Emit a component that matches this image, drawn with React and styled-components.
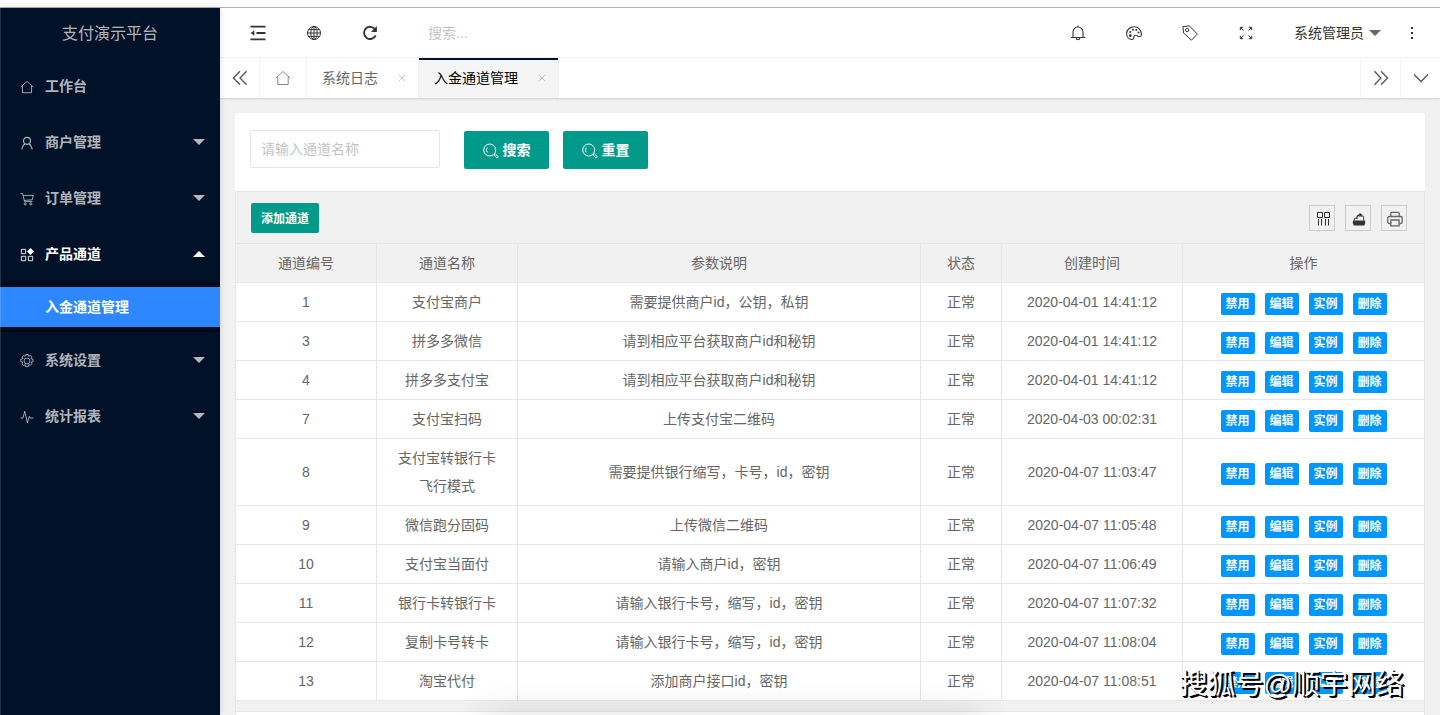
import React from "react";
import styled, { createGlobalStyle, css } from "styled-components";

const GlobalStyle = createGlobalStyle`
  * { box-sizing: border-box; }
  html, body { margin: 0; padding: 0; height: 100%; overflow: hidden; }
  body, button, input {
    font-family: "Liberation Sans", "Noto Sans CJK SC", sans-serif;
    font-size: 14px;
  }
  a { color: inherit; text-decoration: none; }
  button { padding: 0; border: 0; background: none; color: inherit; cursor: pointer; }
`;

/* ---------- icons ---------- */

const Svg = styled.svg`
  display: block;
  flex: none;
  fill: none;
  stroke: currentColor;
`;

function Icon({ size = 16, weight = 1, children }) {
  return (
    <Svg width={size} height={size} viewBox="0 0 16 16" strokeWidth={weight} aria-hidden="true">
      {children}
    </Svg>
  );
}

const icons = {
  home: <path d="M.8 8 8 1.6 15.2 8M2.8 6.6v7.9h10.4V6.6" />,
  user: <path d="M8 1.500a4 4 0 1 1 0 8 4 4 0 0 1 0-8ZM2.200 15.500c.2-3.200 1.300-5 3.600-6.600M13.800 15.500c-.2-3.200-1.300-5-3.600-6.600" strokeWidth="1.300" />,
  cart: (
    <>
      <path d="M.5 1.800h2.500l2.200 9h9M3.600 3.900h11.600l-1.300 5L5 9.600" />
      <circle cx="6" cy="13.600" r="1.200" />
      <circle cx="12.400" cy="13.600" r="1.200" />
    </>
  ),
  grid: (
    <>
      <path d="M1.500 1.500h5v5h-5zM1.500 9.500h5v5h-5zM9.500 9.500h5v5h-5z" />
      <path d="m12 0 4 4-4 4-4-4z" fill="currentColor" stroke="none" />
    </>
  ),
  gear: (
    <>
      <circle cx="8" cy="8" r="3.400" />
      <path d="M6.600.6h2.800l.6 2 1.900-.9 1.700 1.800-.9 1.900 2.200.6v2.700l-2.200.7.9 1.800-1.800 1.900-1.800-.9-.6 2.200H6.600L6 12.200l-1.800.9-1.900-1.900.9-1.800L.9 8.700V6l2.300-.6-.9-1.900L4 1.700l1.900.9z" strokeLinejoin="round" />
    </>
  ),
  pulse: <path d="M.5 9.200h2.900l2-7.700 3.100 13 2.100-7.300 1.100 2h3.800" />,
  fold: (
    <>
      <path d="M.5 1.700h15M6.500 8h9M.5 14.300h15" />
      <path d="M.8 8 4.300 5.200v5.600z" fill="currentColor" stroke="none" />
    </>
  ),
  globe: (
    <>
      <circle cx="8" cy="8" r="6.500" />
      <ellipse cx="8" cy="8" rx="3.200" ry="6.500" />
      <path d="M8 1.500v13M1.500 8h13M2.500 4.600h11M2.500 11.400h11" />
    </>
  ),
  refresh: (
    <>
      <path d="M13.200 4.500A6.100 6.100 0 1 0 13.700 10.400" />
      <path d="M14.900 1v6H9z" fill="currentColor" stroke="none" />
    </>
  ),
  bell: (
    <>
      <path d="M1 12.500h14M3 12.500V7a5 5 0 0 1 10 0v5.500M6.300 13a1.700 1.700 0 0 0 3.400 0M8 2V.6" />
    </>
  ),
  palette: (
    <>
      <path d="M8.300 1.800C3.900 1.800.6 4.700.6 8.600c0 3.600 2.400 5.900 5.200 5.900 1.700 0 2-1.200 2.100-2.500.1-1.200 1-1.900 2.200-1.700 1.400.2 1.900 1.500 3.300 1.500 1.300 0 2.100-1.100 2-2.900-.2-4-3.100-7.100-7.100-7.100Z" />
      <g fill="currentColor" stroke="none">
        <circle cx="4.300" cy="10.700" r="1.400" />
        <circle cx="4.300" cy="7" r="1" />
        <circle cx="7" cy="4.700" r="1" />
        <circle cx="10.300" cy="5" r="1" />
        <circle cx="12.500" cy="7.600" r="1" />
      </g>
    </>
  ),
  tag: (
    <>
      <path d="M.9 1.700 7.300.8l8 8.300-5.900 6.100L1.600 8z" strokeLinejoin="round" />
      <circle cx="5.200" cy="5" r="1.700" />
    </>
  ),
  expand: <path d="M5.600 5.600 2.300 2.300M2.300 5.200V2.300h2.900M10.400 5.600l3.300-3.300M10.800 2.300h2.900v2.900M5.600 10.400l-3.300 3.300M2.300 10.800v2.900h2.900M10.400 10.400l3.300 3.300M13.700 10.800v2.900h-2.900" />,
  dots: (
    <g fill="currentColor" stroke="none">
      <path d="M7 2h2v2H7zM7 7h2v2H7zM7 12h2v2H7z" />
    </g>
  ),
  left: <path d="M8 1.200 1.400 8 8 14.800M14.600 1.200 8 8l6.600 6.800" />,
  right: <path d="m1.400 1.200 6.600 6.800-6.600 6.800M8 1.200 14.600 8 8 14.800" />,
  down: <path d="M1 4.500 8 11.500l7-7" />,
  close: <path d="m1.500 1.500 13 13M14.500 1.500l-13 13" />,
  search: (
    <>
      <circle cx="6.700" cy="7" r="6" />
      <path d="M4.300 4.600a3.800 3.800 0 0 0 0 4.800" />
      <path d="m11 11.900 1.300-1.200 3 3.200-1.200 1.200z" />
    </>
  ),
  columns: <path d="M2.500 1.500h5v5h-5zM9.500 1.500h5v5h-5zM3.500 8v6.500M6.500 8v6.500M10.500 8v6.500M13.500 8v6.500" />,
  exporter: (
    <>
      <path d="M1 9.800h14V13l-1 2.300H2L1 13z" fill="currentColor" stroke="none" />
      <path d="M2.700 10V7.200h2M13.300 10V4.800h-2.800" />
      <path d="M5.500 8c0-3 1-4.600 3.400-4.600" strokeWidth="1.600" />
      <path d="M8.500.8 12.200 3.400 8.500 6z" fill="currentColor" stroke="none" />
    </>
  ),
  printer: (
    <>
      <path d="M3.800 5.500V2.300c0-.6.300-.9.900-.9h6.600c.6 0 .9.300.9.900v3.200" />
      <path d="M3.800 12.500H2.200c-.8 0-1.400-.6-1.400-1.400V7c0-.9.600-1.500 1.500-1.500h11.400c.9 0 1.500.6 1.500 1.500v4.100c0 .8-.6 1.400-1.400 1.400h-1.600" />
      <path d="M3.900 9h8.200v5.800H3.900z" />
    </>
  ),
};

const Caret = styled.span`
  flex: none;
  border: 6px solid transparent;
  ${(p) =>
    p.$up
      ? css`border-bottom-color: currentColor; border-top-width: 0;`
      : css`border-top-color: currentColor; border-bottom-width: 0;`}
`;

/* ---------- shell ---------- */

const Page = styled.div`
  position: relative;
  display: flex;
  flex-direction: column;
  height: 100vh;
  overflow: hidden;
  background: #fff;
  color: #666;
`;

const WindowEdge = styled.div`
  flex: none;
  height: 8px;
  border-bottom: 1px solid #b2b2b2;
`;

const Shell = styled.div`
  flex: 1;
  min-height: 0;
  display: flex;
`;

const Sidebar = styled.aside`
  position: relative;
  z-index: 1;
  flex: none;
  width: 220px;
  background: #001128;
  color: rgba(255, 255, 255, 0.7);
  box-shadow: 0 0 6px rgba(0, 0, 0, 0.15);
  &::after {
    content: "";
    position: absolute;
    inset: 0 auto 0 0;
    width: 1px;
    background: rgba(255, 255, 255, 0.15);
  }
`;

const Brand = styled.h1`
  margin: 0;
  height: 50px;
  line-height: 52px;
  text-align: center;
  font-size: 16px;
  font-weight: 400;
`;

const MenuItem = styled.a`
  display: flex;
  align-items: center;
  height: 56px;
  padding: 0 15px 0 20px;
  font-weight: 700;
  color: ${(p) => (p.$open ? "#fff" : "inherit")};
  & > svg { margin-top: 2px; }
`;

const MenuLabel = styled.span`
  flex: 1;
  padding: 0 0 2px 11px;
`;

const SubMenu = styled.div`
  padding: 5px 0;
  background: #000a18;
`;

const SubItem = styled.a`
  display: block;
  height: 40px;
  line-height: 40px;
  padding-left: 45px;
  background: #2d87ff;
  color: #fff;
  font-weight: 700;
`;

const Main = styled.div`
  flex: 1;
  min-width: 0;
  display: flex;
  flex-direction: column;
  background: #f1f1f1;
`;

const Header = styled.header`
  flex: none;
  display: flex;
  align-items: center;
  height: 50px;
  padding-left: 10px;
  border-bottom: 1px solid #f5f5f5;
  background: #fff;
  color: #333;
`;

const HeaderButton = styled.button`
  display: flex;
  align-items: center;
  gap: 5px;
  height: 49px;
  padding: 0 20px;
`;

const UserButton = styled(HeaderButton)`
  padding: 0 3px 0 20px;
  & > ${Caret} { color: #666; }
`;

const UserName = styled.span`
  padding-bottom: 2px;
`;

const HeaderSearch = styled.input`
  flex: 1;
  min-width: 0;
  height: 48px;
  margin-left: 30px;
  padding: 0;
  border: 0;
  outline: 0;
  background: none;
  &::placeholder { color: #c4c4c4; opacity: 1; }
`;

const Tabs = styled.nav`
  flex: none;
  display: flex;
  height: 40px;
  background: #fff;
  box-shadow: 0 1px 2px rgba(0, 0, 0, 0.15);
`;

const TabControl = styled.button`
  display: flex;
  align-items: center;
  justify-content: center;
  width: ${(p) => (p.$wide ? 47 : 40)}px;
  border: 0 solid #f3f3f3;
  border-width: ${(p) => (p.$end ? "0 0 0 1px" : "0 1px 0 0")};
  color: ${(p) => (p.$wide ? "#888" : "#555")};
`;

const Tab = styled.div`
  display: flex;
  align-items: center;
  gap: 16px;
  padding: 0 8px 0 15px;
  border-right: 1px solid #f3f3f3;
  ${(p) =>
    p.$active &&
    css`
      background: #f5f5f5;
      color: #000;
      box-shadow: inset 0 2px #001128;
    `}
`;

const TabLink = styled.a`
  padding-bottom: 2px;
`;

const TabClose = styled.button`
  display: flex;
  align-items: center;
  justify-content: center;
  width: 16px;
  height: 16px;
  color: #c8c8c8;
`;

const TabSpace = styled.div`
  flex: 1;
`;

/* ---------- content ---------- */

const Content = styled.main`
  flex: 1;
  min-height: 0;
  overflow: hidden;
  padding: 15px;
`;

const SearchForm = styled.form`
  display: flex;
  align-items: center;
  height: 78px;
  padding: 0 15px 4px;
  border-radius: 2px 2px 0 0;
  background: #fff;
`;

const TextInput = styled.input`
  width: 190px;
  height: 38px;
  margin: 0 24px 2px 0;
  padding: 0 10px;
  border: 1px solid #e6e6e6;
  border-radius: 2px;
  outline: 0;
  &::placeholder { color: #c4c4c4; opacity: 1; }
`;

const PrimaryButton = styled.button`
  display: flex;
  align-items: center;
  justify-content: center;
  gap: 4px;
  border-radius: 2px;
  background: #009a8a;
  color: #fff;
  font-weight: 700;
  ${(p) =>
    p.$small
      ? css`width: 68px; height: 30px; font-size: 12px;`
      : css`width: 85px; height: 38px; margin-right: 14px; padding-bottom: 2px;`}
  & > svg { margin-top: 4px; }
`;

const TableBox = styled.section`
  border: 1px solid #e6e6e6;
  background: #fff;
`;

const TableTools = styled.div`
  display: flex;
  align-items: center;
  gap: 10px;
  height: 52px;
  padding: 0 17px 0 15px;
  border-bottom: 1px solid #e6e6e6;
  background: #f1f1f1;
  & > ${PrimaryButton} { margin-right: auto; }
`;

const ToolButton = styled.button`
  display: flex;
  align-items: center;
  justify-content: center;
  width: 26px;
  height: 26px;
  padding: 2px 0 0 2px;
  border: 1px solid #ccc;
  color: ${(p) => (p.$muted ? "#666" : "#333")};
`;

const Table = styled.table`
  width: 100%;
  table-layout: fixed;
  border-collapse: separate;
  border-spacing: 0;
`;

const cell = css`
  padding: 5px 15px;
  line-height: 28px;
  text-align: center;
  border: 0 solid #e6e6e6;
  border-width: 0 1px 1px 0;
  &:last-child { border-right: 0; }
`;

const Th = styled.th`
  ${cell}
  width: ${(p) => p.$width || "auto"};
  background: #f1f1f1;
  font-weight: 400;
`;

const Td = styled.td`
  ${cell}
`;

const ActionCell = styled(Td)`
  padding: 4px 0 0;
`;

const Actions = styled.div`
  display: flex;
  justify-content: center;
  gap: 10px;
`;

const ActionButton = styled.button`
  width: 34px;
  height: 22px;
  border-radius: 2px;
  background: #0096ff;
  color: #fff;
  font-size: 12px;
  font-weight: 700;
  line-height: 22px;
`;

const ScrollGutter = styled.div`
  height: 11px;
  border-bottom: 1px solid #e6e6e6;
  background: #f1f1f1;
`;

const TableFoot = styled.div`
  height: 40px;
`;

const DockShadow = styled.div`
  position: absolute;
  top: 100%;
  left: 34%;
  right: 32%;
  height: 40px;
  box-shadow: 0 0 36px 2px rgba(0, 0, 0, 0.12);
`;

const Watermark = styled.div`
  position: absolute;
  z-index: 2;
  right: 36px;
  bottom: 10px;
  color: #fff;
  font-size: 28px;
  line-height: 40px;
  white-space: nowrap;
  text-shadow: 1px 1px 0 #000, 2px 2px 0 #000;
`;

const menu = [
  { icon: "home", label: "工作台", leaf: true },
  { icon: "user", label: "商户管理" },
  { icon: "cart", label: "订单管理" },
  { icon: "grid", label: "产品通道", children: ["入金通道管理"] },
  { icon: "gear", label: "系统设置" },
  { icon: "pulse", label: "统计报表" },
];

const columns = [
  ["通道编号", "141px"],
  ["通道名称", "141px"],
  ["参数说明"],
  ["状态", "81px"],
  ["创建时间", "181px"],
  ["操作", "241px"],
];

const rows = [
  [1, "支付宝商户", "需要提供商户id，公钥，私钥", "2020-04-01 14:41:12"],
  [3, "拼多多微信", "请到相应平台获取商户id和秘钥", "2020-04-01 14:41:12"],
  [4, "拼多多支付宝", "请到相应平台获取商户id和秘钥", "2020-04-01 14:41:12"],
  [7, "支付宝扫码", "上传支付宝二维码", "2020-04-03 00:02:31"],
  [8, "支付宝转银行卡飞行模式", "需要提供银行缩写，卡号，id，密钥", "2020-04-07 11:03:47"],
  [9, "微信跑分固码", "上传微信二维码", "2020-04-07 11:05:48"],
  [10, "支付宝当面付", "请输入商户id，密钥", "2020-04-07 11:06:49"],
  [11, "银行卡转银行卡", "请输入银行卡号，缩写，id，密钥", "2020-04-07 11:07:32"],
  [12, "复制卡号转卡", "请输入银行卡号，缩写，id，密钥", "2020-04-07 11:08:04"],
  [13, "淘宝代付", "添加商户接口id，密钥", "2020-04-07 11:08:51"],
];

const actions = ["禁用", "编辑", "实例", "删除"];

export default function App() {
  return (
    <Page>
      <GlobalStyle />
      <WindowEdge />
      <Shell>
        <Sidebar>
          <Brand>支付演示平台</Brand>
          <nav>
            {menu.map((m) => (
              <React.Fragment key={m.label}>
                <MenuItem href="#" $open={!!m.children}>
                  <Icon size={14}>{icons[m.icon]}</Icon>
                  <MenuLabel>{m.label}</MenuLabel>
                  {!m.leaf && <Caret $up={!!m.children} />}
                </MenuItem>
                {m.children && (
                  <SubMenu>
                    {m.children.map((c) => (
                      <SubItem href="#" key={c}>{c}</SubItem>
                    ))}
                  </SubMenu>
                )}
              </React.Fragment>
            ))}
          </nav>
        </Sidebar>
        <Main>
          <Header>
            <HeaderButton aria-label="收起菜单"><Icon weight={1.8}>{icons.fold}</Icon></HeaderButton>
            <HeaderButton aria-label="网站"><Icon>{icons.globe}</Icon></HeaderButton>
            <HeaderButton aria-label="刷新"><Icon weight={1.9}>{icons.refresh}</Icon></HeaderButton>
            <HeaderSearch aria-label="搜索" placeholder="搜索..." />
            <HeaderButton aria-label="消息"><Icon weight={1.1}>{icons.bell}</Icon></HeaderButton>
            <HeaderButton aria-label="主题"><Icon weight={1.1}>{icons.palette}</Icon></HeaderButton>
            <HeaderButton aria-label="便签"><Icon>{icons.tag}</Icon></HeaderButton>
            <HeaderButton aria-label="全屏"><Icon>{icons.expand}</Icon></HeaderButton>
            <UserButton><UserName>系统管理员</UserName><Caret /></UserButton>
            <HeaderButton aria-label="更多"><Icon>{icons.dots}</Icon></HeaderButton>
          </Header>
          <Tabs>
            <TabControl aria-label="向左"><Icon weight={1.3}>{icons.left}</Icon></TabControl>
            <TabControl $wide aria-label="首页"><Icon>{icons.home}</Icon></TabControl>
            <Tab>
              <TabLink href="#">系统日志</TabLink>
              <TabClose aria-label="关闭系统日志"><Icon size={8} weight={2}>{icons.close}</Icon></TabClose>
            </Tab>
            <Tab $active>
              <TabLink href="#">入金通道管理</TabLink>
              <TabClose aria-label="关闭入金通道管理"><Icon size={8} weight={2}>{icons.close}</Icon></TabClose>
            </Tab>
            <TabSpace />
            <TabControl $end aria-label="向右"><Icon weight={1.3}>{icons.right}</Icon></TabControl>
            <TabControl $end aria-label="标签操作"><Icon weight={1.3}>{icons.down}</Icon></TabControl>
          </Tabs>
          <Content>
            <SearchForm onSubmit={(e) => e.preventDefault()}>
              <TextInput aria-label="通道名称" placeholder="请输入通道名称" />
              <PrimaryButton><Icon>{icons.search}</Icon>搜索</PrimaryButton>
              <PrimaryButton type="reset"><Icon>{icons.search}</Icon>重置</PrimaryButton>
            </SearchForm>
            <TableBox>
              <TableTools>
                <PrimaryButton $small>添加通道</PrimaryButton>
                <ToolButton aria-label="筛选列"><Icon>{icons.columns}</Icon></ToolButton>
                <ToolButton aria-label="导出"><Icon size={14}>{icons.exporter}</Icon></ToolButton>
                <ToolButton $muted aria-label="打印"><Icon weight={1.3}>{icons.printer}</Icon></ToolButton>
              </TableTools>
              <Table>
                <thead>
                  <tr>
                    {columns.map(([name, width]) => (
                      <Th key={name} $width={width}>{name}</Th>
                    ))}
                  </tr>
                </thead>
                <tbody>
                  {rows.map(([id, name, desc, time]) => (
                    <tr key={id}>
                      <Td>{id}</Td>
                      <Td>{name}</Td>
                      <Td>{desc}</Td>
                      <Td>正常</Td>
                      <Td>{time}</Td>
                      <ActionCell>
                        <Actions>
                          {actions.map((a) => (
                            <ActionButton key={a}>{a}</ActionButton>
                          ))}
                        </Actions>
                      </ActionCell>
                    </tr>
                  ))}
                </tbody>
              </Table>
              <ScrollGutter />
              <TableFoot />
            </TableBox>
          </Content>
        </Main>
      </Shell>
      <DockShadow />
      <Watermark>搜狐号@顺宇网络</Watermark>
    </Page>
  );
}
